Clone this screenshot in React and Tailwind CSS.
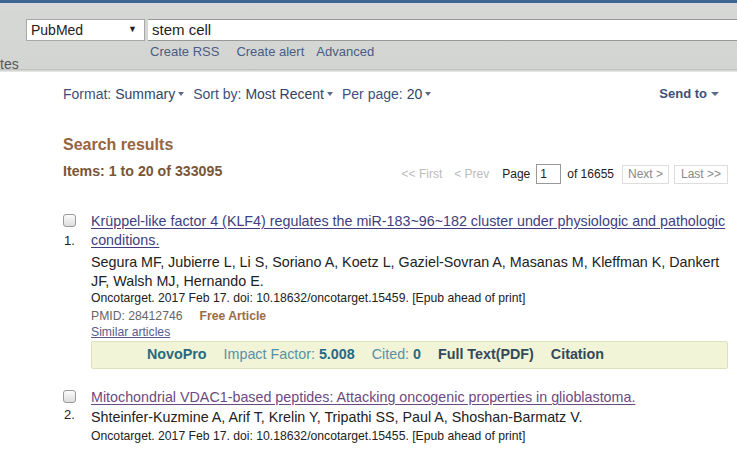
import React from "react";

const Caret = () => (
  <span className="inline-block ml-[3px] shrink-0 w-0 h-0 border-l-[3px] border-r-[3px] border-t-[4px] border-l-transparent border-r-transparent border-t-[#5b6b8a]" />
);

const Checkbox = () => (
  <div className="w-[13px] h-[13px] rounded-[3px] border border-[#9a9a9a] bg-gradient-to-b from-[#fdfdfd] to-[#dcdcdc]" />
);

export default function App() {
  return (
    <div className="w-[737px] h-[449px] overflow-hidden bg-white text-[#222]" style={{ fontFamily: '"Liberation Sans", Arial, sans-serif' }}>
      {/* header */}
      <div className="h-[3px] bg-[#3e6592]" />
      <div className="h-[66px] bg-gradient-to-b from-[#d9d8dc] via-[#d5d7d4] via-[12%] to-[#d3d5d2] flex pt-[16px]">
        <div className="w-[26px] shrink-0 flex items-end">
          <span className="text-[14px] leading-[10px] text-[#555] whitespace-nowrap">tes</span>
        </div>
        <div className="w-[119px] shrink-0 h-[22px] bg-white border border-[#a8a8a8] flex items-center justify-between pl-[4px] pr-[7px]">
          <span className="text-[14px] text-[#222]">PubMed</span>
          <span className="text-[9px] text-[#222]">▼</span>
        </div>
        <div className="flex-1 ml-[3px] flex flex-col min-w-0">
          <div className="h-[22px] bg-white border-y border-[#999] flex items-center pl-[4px]">
            <span className="text-[15px] text-[#222]">stem cell</span>
          </div>
          <div className="flex pl-[2px] mt-[3px] text-[13px] leading-[16px] text-[#4a5c85]">
            <span>Create RSS</span>
            <span className="ml-[17px]">Create alert</span>
            <span className="ml-[12px]">Advanced</span>
          </div>
        </div>
      </div>
      <div className="h-[3px] bg-gradient-to-b from-[#b9bbb8] to-[#eef0ed]" />

      {/* main */}
      <div className="pl-[63px] pr-[8px]">
        <div className="flex items-center h-[44px] text-[14px] text-[#33435f]">
          <span className="text-[#40507a]">Format:</span>
          <span className="ml-[4px]">Summary</span>
          <Caret />
          <span className="ml-[9px] text-[#40507a]">Sort by:</span>
          <span className="ml-[4px]">Most Recent</span>
          <Caret />
          <span className="ml-[9px] text-[#40507a]">Per page:</span>
          <span className="ml-[4px]">20</span>
          <Caret />
          <span className="ml-auto text-[13px] font-bold text-[#40507a]">Send to</span>
          <span className="ml-[4px] mr-[10px] shrink-0 w-0 h-0 border-l-[4px] border-r-[4px] border-t-[4px] border-l-transparent border-r-transparent border-t-[#5b6b8a]" />
        </div>

        <div className="mt-[19px] text-[16px] leading-[20px] font-bold text-[#96643f]">Search results</div>
        <div className="flex items-end justify-between mt-[7px] pr-[1px]">
          <span className="text-[14.2px] leading-[18px] font-bold text-[#7a5634] mb-[4px]">Items: 1 to 20 of 333095</span>
          <div className="flex items-center text-[12px]">
            <span className="text-[#bbb]">&lt;&lt; First</span>
            <span className="ml-[12px] text-[#bbb]">&lt; Prev</span>
            <span className="ml-[13px] text-[#222]">Page</span>
            <div className="ml-[6px] w-[25px] h-[20px] border border-[#999] flex items-center pl-[3px] text-[#222]">1</div>
            <span className="ml-[6px] text-[#222]">of 16655</span>
            <div className="ml-[8px] w-[47px] h-[19px] border border-[#ddd] flex items-center justify-center text-[#888]">Next &gt;</div>
            <div className="ml-[5px] w-[54px] h-[19px] border border-[#ddd] flex items-center justify-center text-[#888]">Last &gt;&gt;</div>
          </div>
        </div>

        {/* result 1 */}
        <div className="flex mt-[27px]">
          <div className="w-[28px] shrink-0 flex flex-col items-start pt-[3px]">
            <Checkbox />
            <span className="mt-[4px] text-[13px] text-[#222] pl-[1px]">1.</span>
          </div>
          <div className="flex-1 pr-[1px] pt-[1px]">
            <div className="text-[14.3px] leading-[19px] text-[#404080] underline underline-offset-[2px]">
              Krüppel-like factor 4 (KLF4) regulates the miR-183~96~182 cluster under physiologic and pathologic conditions.
            </div>
            <div className="mt-[3px] text-[14.3px] leading-[19px] text-[#222]">
              Segura MF, Jubierre L, Li S, Soriano A, Koetz L, Gaziel-Sovran A, Masanas M, Kleffman K, Dankert JF, Walsh MJ, Hernando E.
            </div>
            <div className="-mt-[1px] text-[12.2px] leading-[17px] text-[#222]">
              Oncotarget. 2017 Feb 17. doi: 10.18632/oncotarget.15459. [Epub ahead of print]
            </div>
            <div className="mt-[1px] text-[12.2px] leading-[17px] text-[#666]">
              PMID: 28412746<span className="ml-[17px] font-bold text-[#9a6c44]">Free Article</span>
            </div>
            <div className="text-[12.2px] leading-[15px] text-[#5a5a8f] underline">Similar articles</div>
            <div className="mt-[1px] h-[28px] bg-[#f1f4d6] border border-[#dde2bd] rounded-[2px] flex items-center pl-[55px] text-[14.3px] gap-[17px]">
              <span className="font-bold text-[#276a82]">NovoPro</span>
              <span className="text-[#5a8fa6]">Impact Factor: <b className="text-[#276a82]">5.008</b></span>
              <span className="text-[#5a8fa6]">Cited: <b className="text-[#276a82]">0</b></span>
              <span className="font-bold text-[#34495a]">Full Text(PDF)</span>
              <span className="font-bold text-[#34495a]">Citation</span>
            </div>
          </div>
        </div>

        {/* result 2 */}
        <div className="flex mt-[20px]">
          <div className="w-[28px] shrink-0 flex flex-col items-start pt-[1px]">
            <Checkbox />
            <span className="mt-[2px] text-[13px] text-[#222] pl-[1px]">2.</span>
          </div>
          <div className="flex-1">
            <div className="text-[14.3px] leading-[17px] text-[#6c4a80] underline underline-offset-[2px]">
              Mitochondrial VDAC1-based peptides: Attacking oncogenic properties in glioblastoma.
            </div>
            <div className="mt-[2px] text-[14.3px] leading-[19px] text-[#222]">
              Shteinfer-Kuzmine A, Arif T, Krelin Y, Tripathi SS, Paul A, Shoshan-Barmatz V.
            </div>
            <div className="mt-[1px] text-[12.2px] leading-[17px] text-[#222]">
              Oncotarget. 2017 Feb 17. doi: 10.18632/oncotarget.15455. [Epub ahead of print]
            </div>
          </div>
        </div>
      </div>
    </div>
  );
}
